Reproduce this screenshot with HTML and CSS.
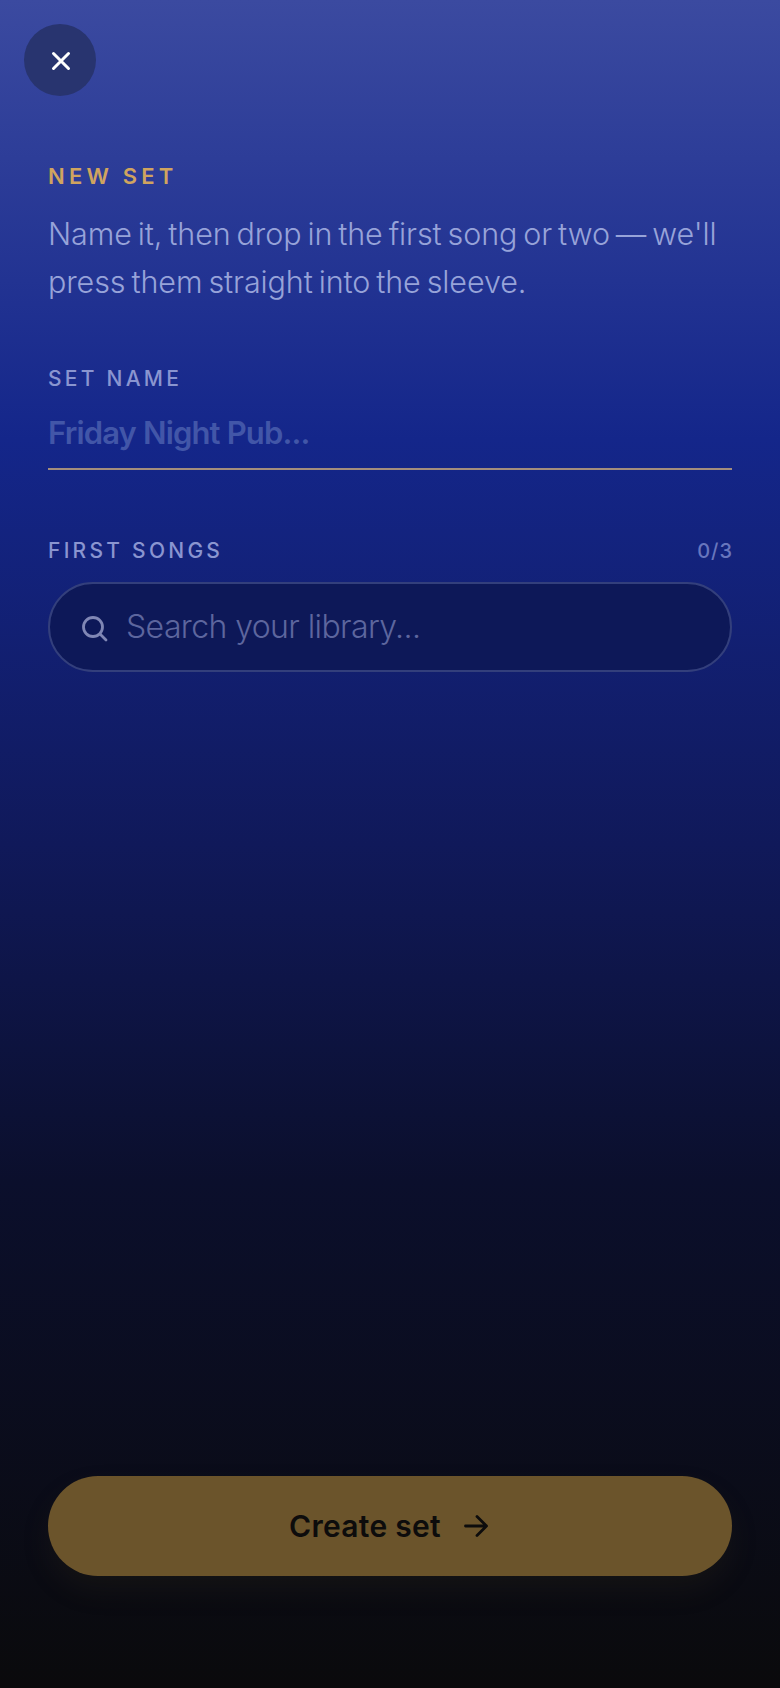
FILE: index.html
```html
<!DOCTYPE html>
<html lang="en">
<head>
  <meta charset="UTF-8">
  <title>New set</title>
  <link rel="stylesheet" href="styles.css">
</head>
<body>
  <div class="screen">
    <button type="button" class="close" aria-label="Close">
      <svg width="22" height="22" viewBox="0 0 22 22" fill="none" stroke="#fff" stroke-width="3" stroke-linecap="round">
        <path d="M3.5 3.5l15 15M18.5 3.5l-15 15"/>
      </svg>
    </button>

    <div class="intro">
      <div class="eyebrow">NEW SET</div>
      <p class="lead">Name it, then drop in the first song or two — we'll press them straight into the sleeve.</p>
    </div>

    <div class="field">
      <div class="label">SET NAME</div>
      <div class="name-input">Friday Night Pub...</div>
    </div>

    <div class="field songs">
      <div class="label-row">
        <div class="label">FIRST SONGS</div>
        <div class="count">0/3</div>
      </div>
      <div class="search">
        <svg class="search-icon" width="28" height="28" viewBox="0 0 28 28" fill="none" stroke="#8087b5" stroke-width="2.8" stroke-linecap="round">
          <circle cx="12" cy="12" r="9.5"/>
          <path d="M19.5 19.5l5.5 5.5"/>
        </svg>
        <span class="search-text">Search your library...</span>
      </div>
    </div>

    <button type="button" class="create">
      <span>Create set</span>
      <svg width="30" height="30" viewBox="0 0 30 30" fill="none" stroke="#0d0c0c" stroke-width="2.8" stroke-linecap="round" stroke-linejoin="round">
        <path d="M4.5 15h21M16 5.5l9.5 9.5-9.5 9.5"/>
      </svg>
    </button>
  </div>
</body>
</html>
```

FILE: styles.css
```css
* {
  box-sizing: border-box;
}
html, body {
  margin: 0;
  padding: 0;
}
body {
  font-family: Inter, "Liberation Sans", sans-serif;
  background-color: #0a0a0c;
}
.screen {
  display: flex;
  flex-direction: column;
  width: 780px;
  height: 1688px;
  padding: 24px 48px 112px;
  background: linear-gradient(180deg, #3b4aa0 0%, #14268a 26%, #10195a 50%, #0b0f2c 70%, #0a0a0c 100%);
}
.close {
  display: flex;
  align-items: center;
  justify-content: center;
  width: 72px;
  height: 72px;
  margin-left: -24px;
  padding: 2px 0 0 2px;
  border: none;
  border-radius: 50%;
  background-color: #28346f;
}
.intro {
  margin-top: 66px;
}
.eyebrow {
  font-size: 22px;
  font-weight: 600;
  line-height: 28px;
  letter-spacing: 4.2px;
  color: #d0a45f;
}
.lead {
  margin: 20px 0 0;
  font-size: 30.5px;
  font-weight: 300;
  line-height: 48px;
  letter-spacing: -0.1px;
  word-spacing: -2.5px;
  color: #97a3d9;
}
.field {
  margin-top: 60px;
}
.label {
  font-size: 21px;
  font-weight: 500;
  line-height: 26px;
  letter-spacing: 3.25px;
  color: #8a95d0;
}
.name-input {
  height: 78px;
  padding-top: 21px;
  border-bottom: 2px solid #a38d7c;
  font-size: 31px;
  font-weight: 600;
  line-height: 40px;
  letter-spacing: -0.85px;
  color: #4256a8;
}
.songs {
  margin-top: 68px;
}
.label-row {
  display: flex;
  align-items: center;
  justify-content: space-between;
}
.count {
  margin-right: -1px;
  font-size: 20px;
  font-weight: 500;
  line-height: 26px;
  letter-spacing: 1px;
  color: #6876bd;
}
.search {
  display: flex;
  align-items: center;
  gap: 16px;
  height: 90px;
  margin-top: 18px;
  padding: 0 32px 0 31px;
  border: 2px solid #333f7c;
  border-radius: 45px;
  background-color: #0d1858;
}
.search-icon {
  margin-top: 3px;
}
.search-text {
  margin: -2px 0 0 1px;
  font-size: 32px;
  font-weight: 300;
  letter-spacing: -0.6px;
  color: #5d669e;
}
.create {
  display: flex;
  align-items: center;
  justify-content: center;
  gap: 20px;
  height: 100px;
  margin-top: auto;
  padding: 0;
  border: none;
  border-radius: 50px;
  background-color: #6b542b;
  box-shadow: 0 14px 30px rgba(107, 84, 43, 0.1);
  font-family: inherit;
  font-size: 30px;
  font-weight: 600;
  letter-spacing: 0.3px;
  color: #0d0c0c;
}
```
